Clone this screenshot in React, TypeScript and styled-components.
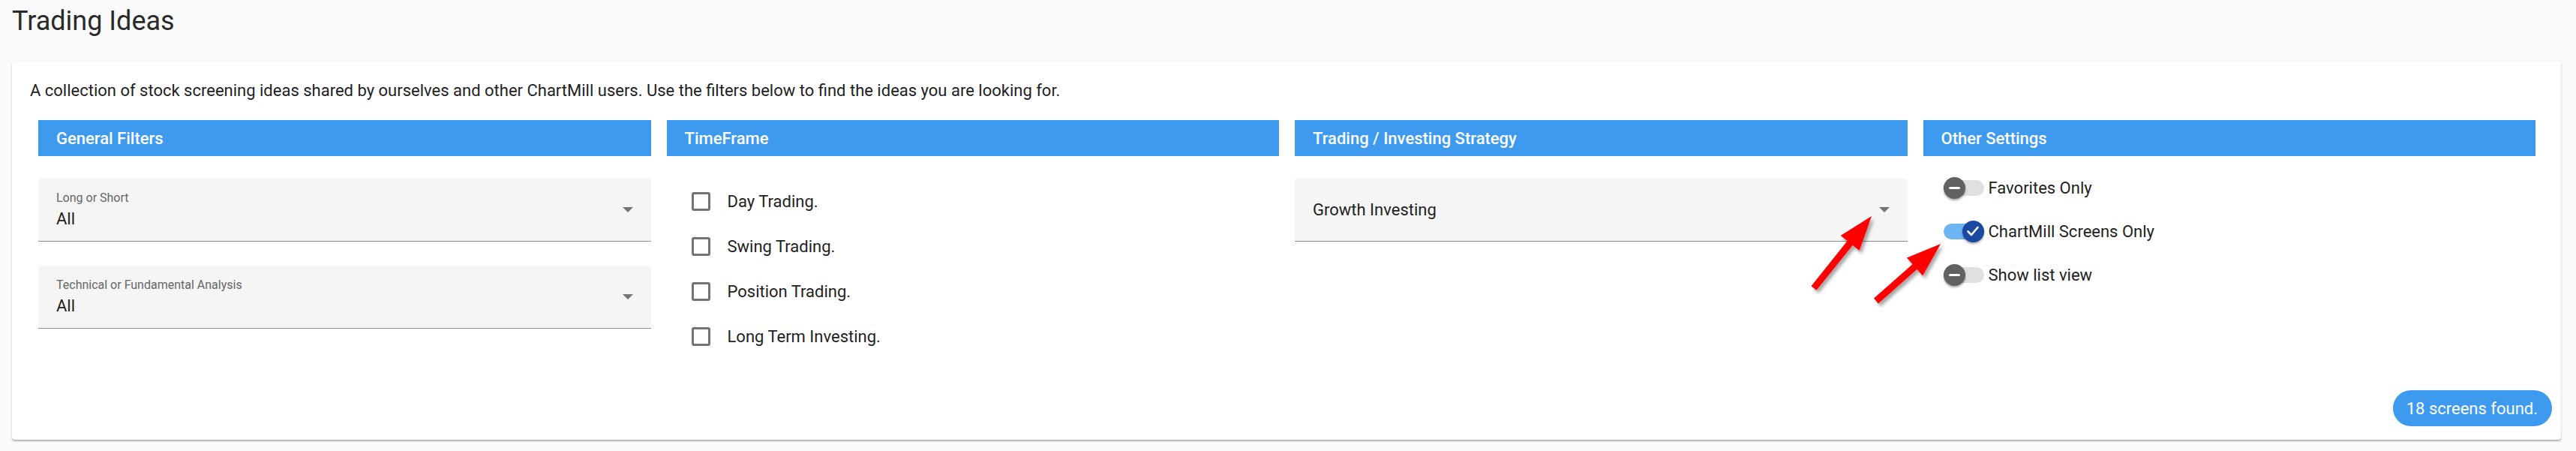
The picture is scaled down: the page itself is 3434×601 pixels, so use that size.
import React from "react";
import styled, { createGlobalStyle } from "styled-components";

const GlobalStyle = createGlobalStyle`
  body {
    margin: 0;
    background: #fafafa;
    font-family: Roboto, "Liberation Sans", Arial, sans-serif;
    color: #212121;
  }
`;

const BLUE = "#3e9aef";

const Page = styled.div`
  position: relative;
  width: 3434px;
  height: 601px;
  padding: 7px 20px 0 16px;
  box-sizing: border-box;
`;

const Title = styled.h1`
  margin: 0 0 32px 0;
  font-size: 36px;
  line-height: 43px;
  font-weight: 400;
  color: #2a2a2a;
`;

const Card = styled.div`
  background: #fff;
  border-radius: 4px;
  box-shadow: 0 2px 2px rgba(0, 0, 0, 0.28), 0 0 2px rgba(0, 0, 0, 0.08);
  padding: 26px 12px 18px 24px;
`;

const Intro = styled.p`
  margin: 0 0 26px 0;
  font-size: 22px;
  line-height: 26px;
  color: #222;
`;

const Grid = styled.div`
  display: grid;
  grid-template-columns: repeat(4, 1fr);
  column-gap: 21px;
  margin: 0 22px 0 11px;
`;

const Column = styled.div`
  display: flex;
  flex-direction: column;
`;

const ColumnHeader = styled.div`
  height: 48px;
  background: ${BLUE};
  color: #fff;
  font-size: 22px;
  font-weight: 500;
  display: flex;
  align-items: center;
  padding-left: 24px;
`;

const ColumnBody = styled.div<{ $top: number }>`
  display: flex;
  flex-direction: column;
  padding-top: ${(p) => p.$top}px;
`;

const Field = styled.div`
  height: 84px;
  box-sizing: border-box;
  background: #f5f5f5;
  border-radius: 4px 4px 0 0;
  border-bottom: 1.5px solid #8d8d8d;
  padding: 0 24px;
  display: flex;
  align-items: center;
  margin-bottom: 32px;
`;

const FieldText = styled.div`
  flex: 1;
  display: flex;
  flex-direction: column;
  gap: 6px;
`;

const FieldLabel = styled.div`
  font-size: 16px;
  line-height: 18px;
  color: #666;
`;

const FieldValue = styled.div`
  font-size: 22px;
  line-height: 26px;
  color: #1f1f1f;
`;

const CheckRow = styled.label`
  height: 60px;
  display: flex;
  align-items: center;
  gap: 23px;
  padding-left: 33px;
  font-size: 22px;
  color: #222;
`;

const CheckBox = styled.span`
  width: 25px;
  height: 25px;
  box-sizing: border-box;
  border: 3px solid #737373;
  border-radius: 3px;
`;

const ToggleRow = styled.div`
  height: 58px;
  display: flex;
  align-items: center;
  gap: 6px;
  padding-left: 27px;
  font-size: 22px;
  color: #222;
`;

const Track = styled.span<{ $on: boolean }>`
  width: 54px;
  height: 21px;
  border-radius: 11px;
  background: ${(p) => (p.$on ? "#6eb5f4" : "#e0e0e0")};
  display: flex;
  align-items: center;
  justify-content: ${(p) => (p.$on ? "flex-end" : "flex-start")};
`;

const Thumb = styled.span<{ $on: boolean }>`
  width: 29px;
  height: 29px;
  flex-shrink: 0;
  border-radius: 50%;
  background: ${(p) => (p.$on ? "#1b49a1" : "#616161")};
  box-shadow: 0 2px 3px rgba(0, 0, 0, 0.35);
  display: flex;
  align-items: center;
  justify-content: center;
`;

const Minus = styled.span`
  width: 15px;
  height: 3px;
  border-radius: 2px;
  background: #fff;
`;

const Footer = styled.div`
  display: flex;
  justify-content: flex-end;
  margin-top: 42px;
`;

const Badge = styled.div`
  height: 48px;
  border-radius: 24px;
  background: ${BLUE};
  color: #fff;
  font-size: 22px;
  display: flex;
  align-items: center;
  padding: 0 19px 0 18px;
`;

const Overlay = styled.svg`
  position: absolute;
  left: 0;
  top: 0;
  pointer-events: none;
`;

function DropArrow() {
  return (
    <svg width="14" height="7" viewBox="0 0 14 7">
      <path d="M0 0h14L7 7z" fill="#757575" />
    </svg>
  );
}

function SelectField(props: { label?: string; value: string }) {
  const { label, value } = props;
  return (
    <Field>
      <FieldText>
        {label && <FieldLabel>{label}</FieldLabel>}
        <FieldValue>{value}</FieldValue>
      </FieldText>
      <DropArrow />
    </Field>
  );
}

function Toggle(props: { on?: boolean; label: string }) {
  const on = !!props.on;
  return (
    <ToggleRow>
      <Track $on={on}>
        <Thumb $on={on}>
          {on ? (
            <svg width="18" height="16" viewBox="0 0 18 16">
              <path
                d="M2.5 8.5l4.5 4.5 8.5-10"
                stroke="#fff"
                strokeWidth="2.6"
                fill="none"
                strokeLinecap="round"
                strokeLinejoin="round"
              />
            </svg>
          ) : (
            <Minus />
          )}
        </Thumb>
      </Track>
      {props.label}
    </ToggleRow>
  );
}

// red annotation arrow, tail -> tip
function arrowPoints(tx: number, ty: number, hx: number, hy: number) {
  const headLen = 46;
  const headHalf = 16;
  const shaftHalf = 4.5;
  const dx = hx - tx;
  const dy = hy - ty;
  const len = Math.hypot(dx, dy);
  const ux = dx / len;
  const uy = dy / len;
  const px = -uy;
  const py = ux;
  const bx = hx - ux * headLen;
  const by = hy - uy * headLen;
  const pts = [
    [tx + px * shaftHalf, ty + py * shaftHalf],
    [bx + px * shaftHalf, by + py * shaftHalf],
    [bx + px * headHalf, by + py * headHalf],
    [hx, hy],
    [bx - px * headHalf, by - py * headHalf],
    [bx - px * shaftHalf, by - py * shaftHalf],
    [tx - px * shaftHalf, ty - py * shaftHalf],
  ];
  return pts.map((p) => p[0].toFixed(1) + "," + p[1].toFixed(1)).join(" ");
}

const timeframes = ["Day Trading.", "Swing Trading.", "Position Trading.", "Long Term Investing."];

export default function App() {
  return (
    <>
      <GlobalStyle />
      <Page>
        <Title>Trading Ideas</Title>
        <Card>
          <Intro>
            A collection of stock screening ideas shared by ourselves and other ChartMill users. Use the
            filters below to find the ideas you are looking for.
          </Intro>
          <Grid>
            <Column>
              <ColumnHeader>General Filters</ColumnHeader>
              <ColumnBody $top={30}>
                <SelectField label="Long or Short" value="All" />
                <SelectField label="Technical or Fundamental Analysis" value="All" />
              </ColumnBody>
            </Column>
            <Column>
              <ColumnHeader>TimeFrame</ColumnHeader>
              <ColumnBody $top={30}>
                {timeframes.map((t) => (
                  <CheckRow key={t}>
                    <CheckBox />
                    {t}
                  </CheckRow>
                ))}
              </ColumnBody>
            </Column>
            <Column>
              <ColumnHeader>Trading / Investing Strategy</ColumnHeader>
              <ColumnBody $top={30}>
                <SelectField value="Growth Investing" />
              </ColumnBody>
            </Column>
            <Column>
              <ColumnHeader>Other Settings</ColumnHeader>
              <ColumnBody $top={13}>
                <Toggle label="Favorites Only" />
                <Toggle on label="ChartMill Screens Only" />
                <Toggle label="Show list view" />
              </ColumnBody>
            </Column>
          </Grid>
          <Footer>
            <Badge>18 screens found.</Badge>
          </Footer>
        </Card>
        <Overlay width="3434" height="601" viewBox="0 0 3434 601">
          <defs>
            <filter id="arrowShadow" x="-20%" y="-20%" width="140%" height="140%">
              <feDropShadow dx="3" dy="4" stdDeviation="2" floodColor="#000" floodOpacity="0.35" />
            </filter>
          </defs>
          <polygon points={arrowPoints(2418, 384, 2495, 288)} fill="#ff0000" filter="url(#arrowShadow)" />
          <polygon points={arrowPoints(2501, 401, 2587, 325)} fill="#ff0000" filter="url(#arrowShadow)" />
        </Overlay>
      </Page>
    </>
  );
}
